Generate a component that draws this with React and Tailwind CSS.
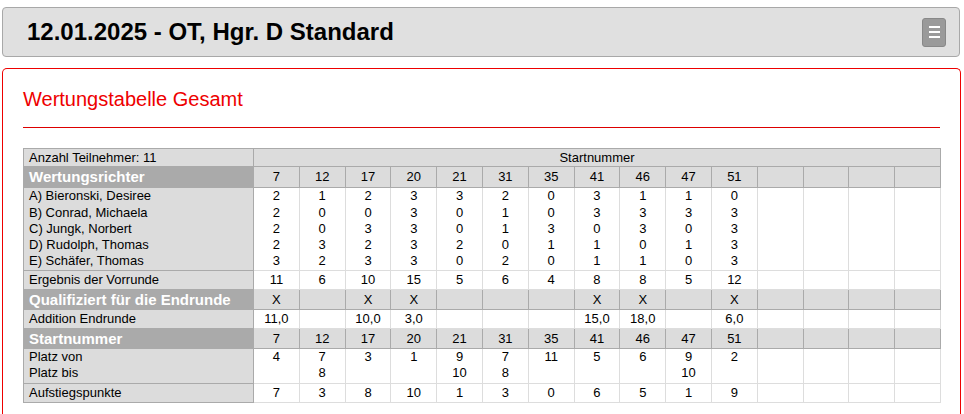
import React from 'react';

const starts = [7, 12, 17, 20, 21, 31, 35, 41, 46, 47, 51];
const empty = 4;

const judges = [
  { name: 'A) Bieronski, Desiree', v: [2, 1, 2, 3, 3, 2, 0, 3, 1, 1, 0] },
  { name: 'B) Conrad, Michaela', v: [2, 0, 0, 3, 0, 1, 0, 3, 3, 3, 3] },
  { name: 'C) Jungk, Norbert', v: [2, 0, 3, 3, 0, 1, 3, 0, 3, 0, 3] },
  { name: 'D) Rudolph, Thomas', v: [2, 3, 2, 3, 2, 0, 1, 1, 0, 1, 3] },
  { name: 'E) Schäfer, Thomas', v: [3, 2, 3, 3, 0, 2, 0, 1, 1, 0, 3] },
];

const vorrunde = [11, 6, 10, 15, 5, 6, 4, 8, 8, 5, 12];
const quali = ['X', '', 'X', 'X', '', '', '', 'X', 'X', '', 'X'];
const addition = ['11,0', '', '10,0', '3,0', '', '', '', '15,0', '18,0', '', '6,0'];
const platzVon = [4, 7, 3, 1, 9, 7, 11, 5, 6, 9, 2];
const platzBis = ['', 8, '', '', 10, 8, '', '', '', 10, ''];
const aufstieg = [7, 3, 8, 10, 1, 3, 0, 6, 5, 1, 9];

const pad = (arr) => [...arr, ...Array(empty).fill('')];

const labelCell = 'border border-[#aaa] bg-[#dcdcdc] pl-[5px] text-left';
const headLabel = 'border border-[#aaa] bg-[#aaa] pl-[5px] text-left text-[15px] font-bold text-white';
const grayCell = 'border border-[#aaa] bg-[#dcdcdc] text-center';
const whiteCell = 'border border-[#ddd] bg-white text-center';

function ValueRow({ label, values, h }) {
  return (
    <tr className={h}>
      <td className={labelCell}>{label}</td>
      {pad(values).map((v, i) => (
        <td key={i} className={whiteCell}>{v}</td>
      ))}
    </tr>
  );
}

function HeadRow({ label, values, h }) {
  return (
    <tr className={h}>
      <td className={headLabel}>{label}</td>
      {pad(values).map((v, i) => (
        <td key={i} className={grayCell}>{v}</td>
      ))}
    </tr>
  );
}

export default function App() {
  return (
    <div className="h-[414px] overflow-hidden bg-white pt-[7px] pl-[2px] font-['Liberation_Sans',Arial,sans-serif] text-black">
      <div className="flex h-[50px] w-[958px] items-center justify-between rounded-[4px] border border-[#a8a8a8] bg-[#e0e0e0] pl-[24px] pr-[13px]">
        <h1 className="text-[24px] font-bold leading-[28px]">12.01.2025 - OT, Hgr. D Standard</h1>
        <button className="flex h-[29px] w-[24px] flex-col items-center justify-center gap-[3px] rounded-[3px] border border-[#888] bg-[#9a9a9a]">
          <span className="block h-[2px] w-[11px] bg-white" />
          <span className="block h-[2px] w-[11px] bg-white" />
          <span className="block h-[2px] w-[11px] bg-white" />
        </button>
      </div>

      <div className="mt-[11px] h-[346px] w-[959px] rounded-t-[5px] border border-b-0 border-[#e00] px-[20px] pt-[19px]">
        <h2 className="text-[20px] leading-[23px] text-[#e00]">Wertungstabelle Gesamt</h2>
        <hr className="mt-[16px] border-t border-[#d00]" />

        <table className="mt-[20px] w-[918px] table-fixed border-collapse text-[13px] leading-[16px]">
          <colgroup>
            <col className="w-[230px]" />
            {pad(starts).map((_, i) => (
              <col key={i} />
            ))}
          </colgroup>
          <tbody>
            <tr className="h-[18px]">
              <td className={labelCell}>Anzahl Teilnehmer: {starts.length}</td>
              <td colSpan={15} className={grayCell}>Startnummer</td>
            </tr>
            <HeadRow label="Wertungsrichter" values={starts} h="h-[21px]" />
            <tr className="h-[83px] leading-[16.3px]">
              <td className={labelCell}>
                {judges.map((j) => (
                  <div key={j.name}>{j.name}</div>
                ))}
              </td>
              {pad(starts).map((_, i) => (
                <td key={i} className={whiteCell}>
                  {i < starts.length && judges.map((j, k) => <div key={k}>{j.v[i]}</div>)}
                </td>
              ))}
            </tr>
            <ValueRow label="Ergebnis der Vorrunde" values={vorrunde} h="h-[19px]" />
            <HeadRow label="Qualifiziert für die Endrunde" values={quali} h="h-[20px]" />
            <ValueRow label="Addition Endrunde" values={addition} h="h-[19px]" />
            <HeadRow label="Startnummer" values={starts} h="h-[20px]" />
            <tr className="h-[35px]">
              <td className={`${labelCell} align-top`}>
                <div>Platz von</div>
                <div>Platz bis</div>
              </td>
              {pad(starts).map((_, i) => (
                <td key={i} className={`${whiteCell} align-top`}>
                  <div>{i < starts.length ? platzVon[i] : ''}</div>
                  <div>{i < starts.length ? platzBis[i] : ''}</div>
                </td>
              ))}
            </tr>
            <ValueRow label="Aufstiegspunkte" values={aufstieg} h="h-[19px]" />
          </tbody>
        </table>
      </div>
    </div>
  );
}
